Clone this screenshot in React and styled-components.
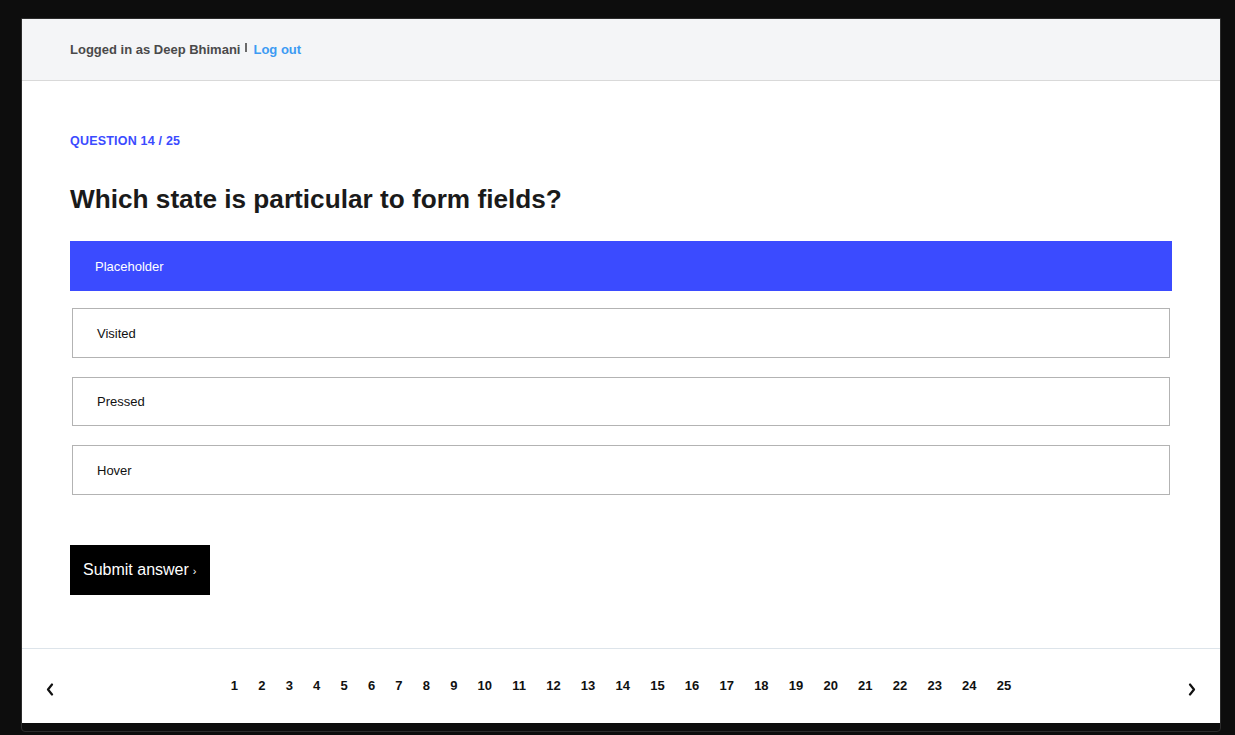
import React, { useState } from 'react';
import styled, { createGlobalStyle } from 'styled-components';

// ─── Global ───────────────────────────────────────────────────
const GlobalStyle = createGlobalStyle`
  html, body {
    margin: 0;
    padding: 0;
    background: #0d0d0d;
  }
  body {
    font-family: "Liberation Sans", Arial, Helvetica, sans-serif;
    -webkit-font-smoothing: antialiased;
  }
  * { box-sizing: border-box; }
`;

// ─── Frame ────────────────────────────────────────────────────
const Page = styled.div`
  padding: 18px 14px 0 21px;
  height: 735px;
`;

const Frame = styled.div`
  border: 1px solid #2c2c2c;
  border-radius: 0 0 4px 4px;
  padding-bottom: 8px;
`;

const Panel = styled.div`
  background: #fff;
  display: flex;
  flex-direction: column;
`;

// ─── Header ───────────────────────────────────────────────────
const Header = styled.header`
  height: 62px;
  background: #f4f5f7;
  border-bottom: 1px solid #d9d9d9;
  display: flex;
  align-items: center;
  padding: 0 48px;
  font-size: 13px;
  font-weight: 700;
  color: #4a4a4a;
`;

const Sep = styled.span`
  display: inline-block;
  width: 2px;
  height: 9px;
  background: #6a6a6a;
  margin: 0 6px 0 5px;
  position: relative;
  top: -2px;
`;

const LogOut = styled.a`
  color: #3d9bf3;
  text-decoration: none;
`;

// ─── Question ─────────────────────────────────────────────────
const Body = styled.main`
  padding: 53px 48px 53px;
`;

const Label = styled.div`
  font-size: 12.5px;
  font-weight: 700;
  color: #3b4bff;
  letter-spacing: 0.2px;
`;

const Title = styled.h1`
  margin: 36px 0 26px;
  font-size: 26.2px;
  font-weight: 700;
  color: #1a1a1a;
  line-height: 1.2;
`;

const Options = styled.div`
  display: flex;
  flex-direction: column;
`;

const Option = styled.button`
  display: flex;
  align-items: center;
  font-family: inherit;
  font-size: 13px;
  text-align: left;
  cursor: pointer;
  height: ${({ $active }) => ($active ? '50px' : '49.5px')};
  margin: ${({ $active }) => ($active ? '0 0 17px' : '0 2px 19px')};
  padding: ${({ $active }) => ($active ? '0 25px' : '0 24px')};
  background: ${({ $active }) => ($active ? '#3b4bff' : '#fff')};
  color: ${({ $active }) => ($active ? '#fff' : '#111')};
  border: ${({ $active }) => ($active ? 'none' : '1px solid #b3b3b3')};
`;

const Submit = styled.button`
  margin-top: 31px;
  align-self: flex-start;
  height: 50px;
  padding: 0 13px;
  background: #000;
  color: #fff;
  border: none;
  font-family: inherit;
  font-size: 16px;
  cursor: pointer;
`;

const Chev = styled.span`
  font-size: 11px;
  margin-left: 4px;
`;

// ─── Pager ────────────────────────────────────────────────────
const Pager = styled.nav`
  border-top: 1px solid #dde4ea;
  height: 75px;
  display: flex;
  align-items: center;
  justify-content: space-between;
  padding: 0 22px;
`;

const Arrow = styled.button`
  background: none;
  border: none;
  padding: 0;
  width: 12px;
  margin-top: 8px;
  cursor: pointer;
  color: #111;
  display: flex;
  align-items: center;
  justify-content: center;
`;

const Numbers = styled.div`
  display: flex;
  gap: 20.2px;
  margin-top: -1px;
`;

const Num = styled.button`
  background: none;
  border: none;
  padding: 0;
  font-family: inherit;
  font-size: 13px;
  font-weight: 700;
  color: #111;
  cursor: pointer;
`;

const ChevronIcon = ({ dir }) => (
  <svg width="8" height="13" viewBox="0 0 8 13" fill="none">
    <path
      d={dir === 'left' ? 'M6 1.5L2 6.5l4 5' : 'M2 1.5L6 6.5l-4 5'}
      stroke="#111"
      strokeWidth="2.2"
      strokeLinecap="round"
      strokeLinejoin="round"
    />
  </svg>
);

// ─── Component ────────────────────────────────────────────────
const answers = ['Placeholder', 'Visited', 'Pressed', 'Hover'];

const App = () => {
  const [selected, setSelected] = useState(0);
  const pages = Array.from({ length: 25 }, (_, i) => i + 1);

  return (
    <>
      <GlobalStyle />
      <Page>
        <Frame>
          <Panel>
            <Header>
              Logged in as Deep Bhimani
              <Sep />
              <LogOut href="#">Log out</LogOut>
            </Header>

            <Body>
              <Label>QUESTION 14 / 25</Label>
              <Title>Which state is particular to form fields?</Title>
              <Options>
                {answers.map((a, i) => (
                  <Option key={a} $active={selected === i} onClick={() => setSelected(i)}>
                    {a}
                  </Option>
                ))}
                <Submit>
                  Submit answer<Chev>›</Chev>
                </Submit>
              </Options>
            </Body>

            <Pager>
              <Arrow aria-label="Previous"><ChevronIcon dir="left" /></Arrow>
              <Numbers>
                {pages.map(p => <Num key={p}>{p}</Num>)}
              </Numbers>
              <Arrow aria-label="Next"><ChevronIcon dir="right" /></Arrow>
            </Pager>
          </Panel>
        </Frame>
      </Page>
    </>
  );
};

export default App;
